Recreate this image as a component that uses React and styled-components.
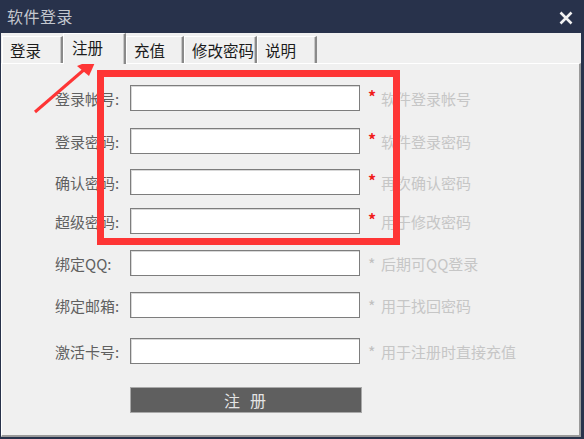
import React from "react";
import styled, { createGlobalStyle } from "styled-components";

const Global = createGlobalStyle`
  html, body { margin: 0; padding: 0; background: #28324b; }
  body { font-family: "Noto Sans CJK SC", "Noto Sans", sans-serif; }
`;

const Window = styled.div`
  position: relative;
  width: 584px;
  height: 439px;
  box-sizing: border-box;
  background: #28324b;
  padding: 0 3px 2px 1px;
  display: flex;
  flex-direction: column;
`;

const TitleBar = styled.div`
  height: 33px;
  display: flex;
  align-items: center;
  justify-content: space-between;
  padding: 0 8px 0 6px;
  box-sizing: border-box;
`;

const Title = styled.div`
  color: #c3c7cf;
  font-size: 16px;
  letter-spacing: 0.5px;
  margin-top: -1px;
`;

const Close = styled.div`
  width: 14px;
  height: 14px;
  display: flex;
  margin-top: 2px;
`;

const Body = styled.div`
  flex: 1;
  background: #f0f0f0;
  display: flex;
  flex-direction: column;
`;

const TabBar = styled.div`
  height: 30px;
  display: flex;
  align-items: flex-end;
  padding-left: 1px;
`;

const Tab = styled.div`
  position: relative;
  z-index: ${(p) => (p.$active ? 2 : 1)};
  width: ${(p) => p.$w}px;
  height: ${(p) => (p.$active ? 31 : 27)}px;
  margin-bottom: ${(p) => (p.$active ? -1 : 0)}px;
  box-sizing: border-box;
  background: #f0f0f0;
  border-top: 1px solid #ffffff;
  border-left: 1px solid #ffffff;
  border-right: 2px solid #8a8a8a;
  box-shadow: inset -1px 0 0 #c8c8c8;
  padding: ${(p) => (p.$active ? "3px 0 0 8px" : "3px 0 0 7px")};
  font-size: 15.5px;
  line-height: 20px;
  color: #1c1c1c;
  white-space: nowrap;
`;

const Panel = styled.div`
  flex: 1;
  border-top: 1px solid #ffffff;
  border-left: 1px solid #ffffff;
  border-right: 2px solid #9a9a9a;
  border-bottom: 2px solid #9a9a9a;
  padding: 21px 0 0 53px;
  display: flex;
  flex-direction: column;
`;

const Row = styled.div`
  display: flex;
  align-items: center;
  height: 26px;
  margin-top: ${(p) => p.$mt}px;
`;

const Label = styled.div`
  width: 75px;
  font-size: 15px;
  color: #606060;
  white-space: nowrap;
`;

const Input = styled.div`
  width: 230px;
  height: 26px;
  box-sizing: border-box;
  background: #ffffff;
  border: 1px solid #7d7d7d;
  box-shadow: inset 1px 1px 0 #d8d8d8;
`;

const Hint = styled.div`
  margin-left: 8px;
  display: flex;
  align-items: center;
  font-size: 15px;
  color: #c6c6c6;
  white-space: nowrap;
`;

const Star = styled.span`
  color: ${(p) => (p.$red ? "#f01c1c" : "#c0c0c0")};
  font-size: 16px;
  width: 13px;
  margin-top: ${(p) => (p.$red ? -4 : 2)}px;
  font-weight: ${(p) => (p.$red ? "bold" : "normal")};
`;

const Submit = styled.div`
  margin-left: 75px;
  width: 232px;
  height: 26px;
  box-sizing: border-box;
  background: #5f5f5f;
  border: 1px solid #a9a9a9;
  color: #e4e4e4;
  font-size: 16px;
  letter-spacing: 10px;
  display: flex;
  align-items: center;
  justify-content: center;
  padding-left: 8px;
`;

const Highlight = styled.div`
  position: absolute;
  left: 97px;
  top: 70px;
  width: 303px;
  height: 175px;
  box-sizing: border-box;
  border: 7px solid #fe3535;
  pointer-events: none;
`;

const Overlay = styled.svg`
  position: absolute;
  left: 0;
  top: 0;
  pointer-events: none;
`;

const tabs = [
  { name: "登录", w: 61 },
  { name: "注册", w: 63, active: true },
  { name: "充值", w: 58 },
  { name: "修改密码", w: 73 },
  { name: "说明", w: 60 },
];

const rows = [
  { label: "登录帐号:", hint: "软件登录帐号", red: true, mt: 0 },
  { label: "登录密码:", hint: "软件登录密码", red: true, mt: 17 },
  { label: "确认密码:", hint: "再次确认密码", red: true, mt: 15 },
  { label: "超级密码:", hint: "用于修改密码", red: true, mt: 13 },
  { label: "绑定QQ:", hint: "后期可QQ登录", mt: 16 },
  { label: "绑定邮箱:", hint: "用于找回密码", mt: 16 },
  { label: "激活卡号:", hint: "用于注册时直接充值", mt: 20 },
];

export default function App() {
  return (
    <Window>
      <Global />
      <TitleBar>
        <Title>软件登录</Title>
        <Close>
          <svg width="14" height="14" viewBox="0 0 14 14">
            <path d="M1.5 1.5 L12.5 12.5 M12.5 1.5 L1.5 12.5" stroke="#f2f2f2" strokeWidth="2.6" />
          </svg>
        </Close>
      </TitleBar>
      <Body>
        <TabBar>
          {tabs.map((t) => (
            <Tab key={t.name} $w={t.w} $active={t.active}>
              {t.name}
            </Tab>
          ))}
        </TabBar>
        <Panel>
          {rows.map((r) => (
            <Row key={r.label} $mt={r.mt}>
              <Label>{r.label}</Label>
              <Input />
              <Hint>
                <Star $red={r.red}>*</Star>
                {r.hint}
              </Hint>
            </Row>
          ))}
          <Row $mt={23}>
            <Submit>注册</Submit>
          </Row>
        </Panel>
      </Body>
      <Highlight />
      <Overlay width="584" height="439" viewBox="0 0 584 439">
        <line x1="35" y1="112" x2="86" y2="68" stroke="#fe3535" strokeWidth="3" />
        <polygon points="97,58 77,66 89,76" fill="#fe3535" />
      </Overlay>
    </Window>
  );
}
